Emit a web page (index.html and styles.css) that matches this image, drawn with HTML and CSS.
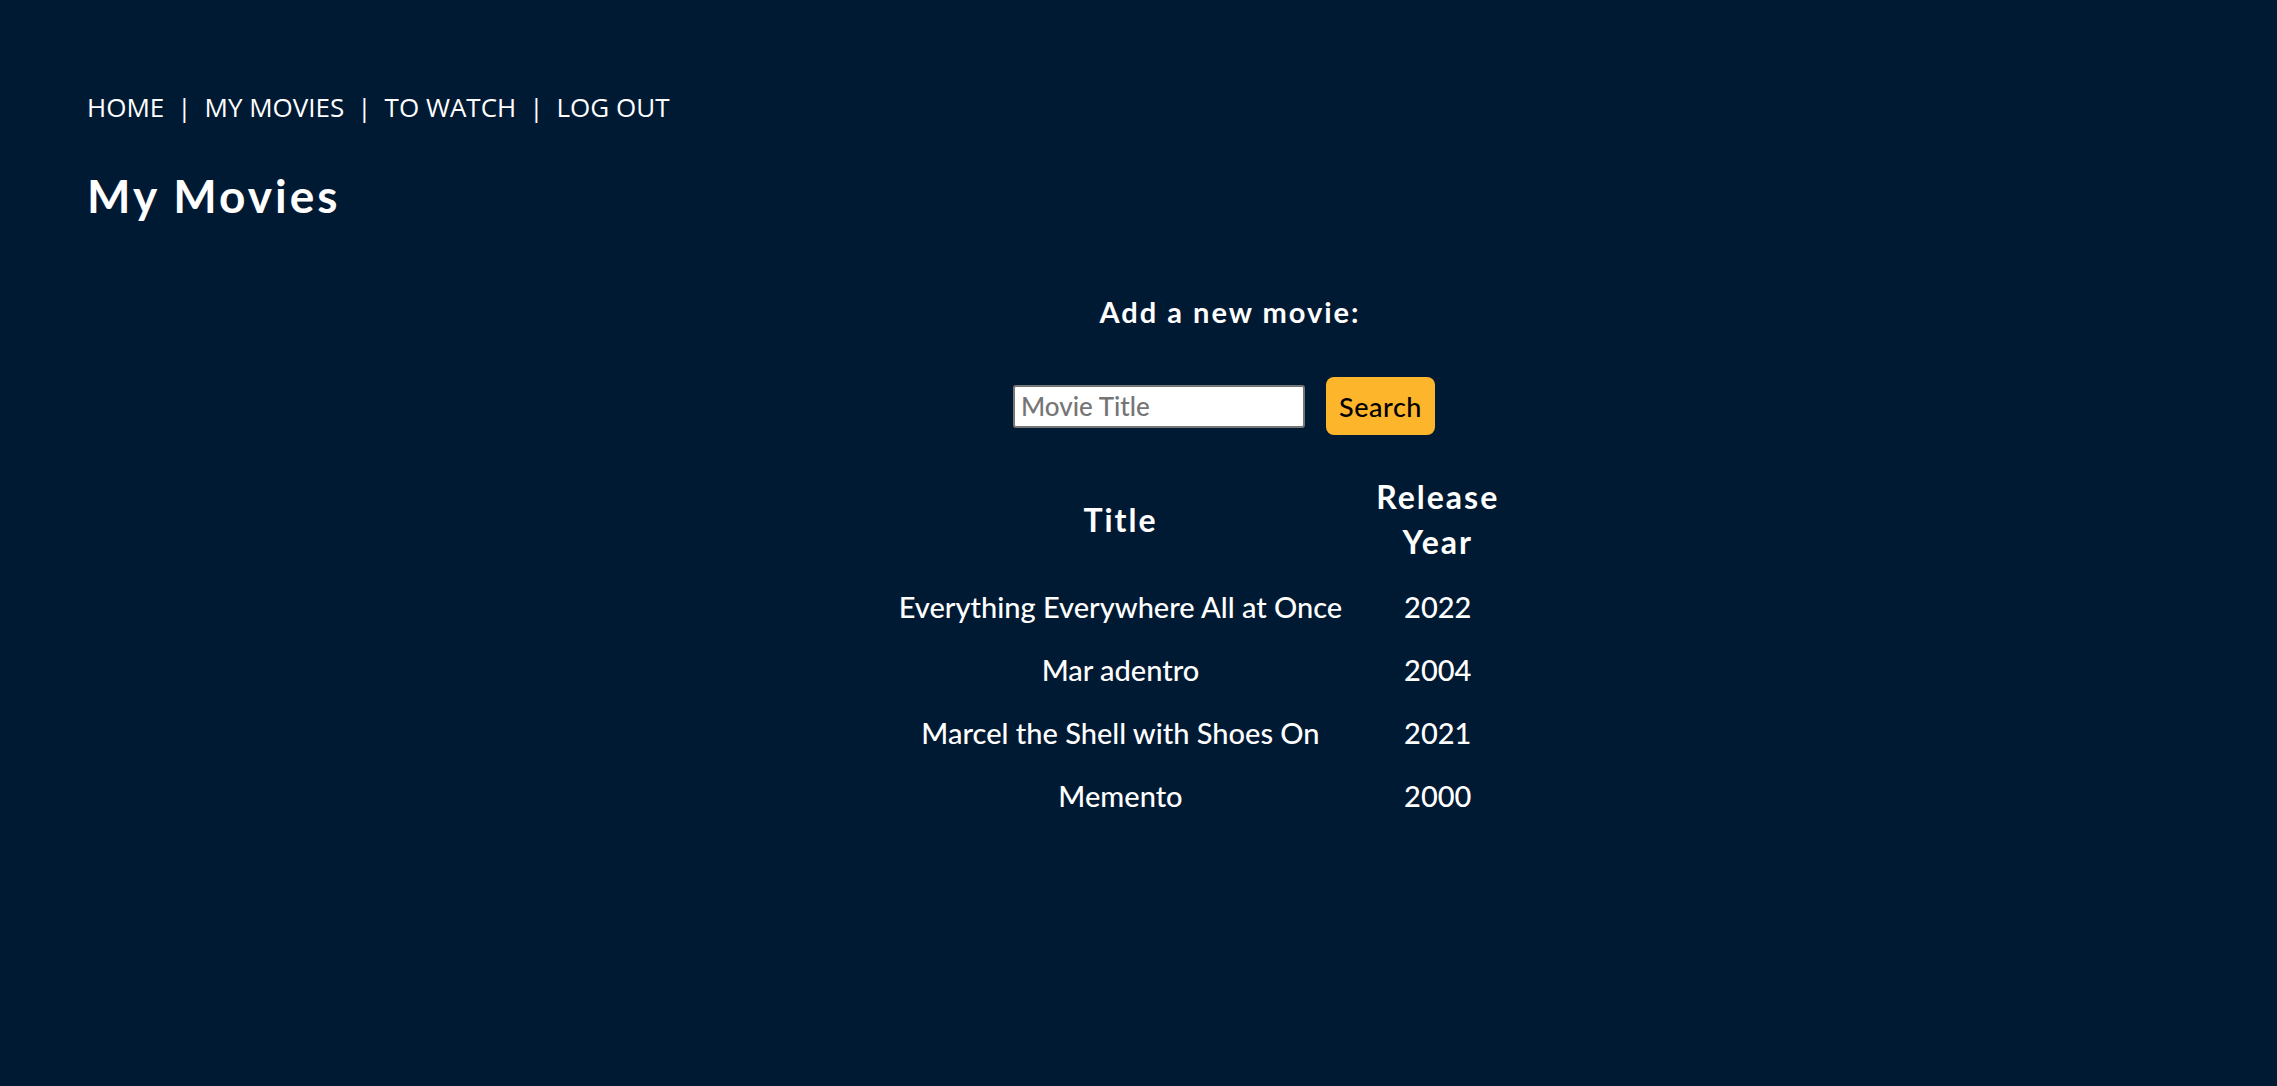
FILE: index.html
```html
<!DOCTYPE html>
<html lang="en">
<head>
<meta charset="utf-8">
<title>My Movies</title>
<link rel="stylesheet" href="styles.css">
</head>
<body>
<div class="page">
  <nav class="nav">
    <a href="#">HOME</a><span class="sep">|</span><a href="#">MY MOVIES</a><span class="sep">|</span><a href="#">TO WATCH</a><span class="sep">|</span><a href="#">LOG OUT</a>
  </nav>
  <h1 class="page-title">My Movies</h1>
  <main class="main">
    <h2 class="add-label">Add a new movie:</h2>
    <form class="search-form">
      <input class="search-input" type="text" placeholder="Movie Title">
      <button class="search-btn" type="button">Search</button>
    </form>
    <table class="movies">
      <thead>
        <tr><th class="col-title">Title</th><th class="col-year">Release Year</th></tr>
      </thead>
      <tbody>
        <tr><td>Everything Everywhere All at Once</td><td>2022</td></tr>
        <tr><td>Mar adentro</td><td>2004</td></tr>
        <tr><td>Marcel the Shell with Shoes On</td><td>2021</td></tr>
        <tr><td>Memento</td><td>2000</td></tr>
      </tbody>
    </table>
  </main>
</div>
</body>
</html>
```

FILE: styles.css
```css
html, body {
  margin: 0;
  padding: 0;
}
body {
  background: #011a33;
  color: #ffffff;
  font-family: "Lato", "Noto Sans", sans-serif;
  min-height: 1086px;
}
.page {
  padding: 90px 0 0 87px;
}
.nav {
  font-family: "Open Sans", "Noto Sans", sans-serif;
  font-size: 26px;
  line-height: 1.362;
  white-space: nowrap;
}
.nav a {
  color: #ffffff;
  text-decoration: none;
}
.nav .sep {
  margin: 0 13px;
}
.page-title {
  margin: 43px 0 0;
  font-size: 46px;
  font-weight: 700;
  letter-spacing: 3px;
  line-height: 1.2;
}
.main {
  display: flex;
  flex-direction: column;
  align-items: center;
  padding-left: 84px;
}
.add-label {
  margin: 71px 0 0;
  padding-left: 12px;
  font-size: 29px;
  font-weight: 700;
  letter-spacing: 2px;
  line-height: 1.2;
}
.search-form {
  display: flex;
  align-items: center;
  gap: 21px;
  margin-top: 48px;
}
.search-input {
  box-sizing: border-box;
  width: 292px;
  height: 43px;
  border: 2px solid #767676;
  border-radius: 3px;
  padding: 0 6px;
  font-family: "Lato", "Noto Sans", sans-serif;
  font-size: 26px;
  font-weight: 500;
  color: #000;
  background: #fff;
}
.search-input::placeholder {
  color: #757575;
}
.search-btn {
  box-sizing: border-box;
  width: 109px;
  height: 58px;
  border: none;
  border-radius: 8px;
  background: #fdb52b;
  color: #000;
  font-family: "Lato", "Noto Sans", sans-serif;
  font-size: 27px;
  font-weight: 500;
  letter-spacing: 0.5px;
  padding: 0;
}
.movies {
  margin-top: 28px;
  margin-right: 50px;
  border-spacing: 2px;
  text-align: center;
}
.movies th {
  font-size: 32px;
  font-weight: 700;
  letter-spacing: 2px;
  line-height: 44.5px;
  padding: 10px 16px;
  vertical-align: middle;
}
.movies th.col-title {
  width: 441px;
}
.movies th.col-year {
  width: 122px;
}
.movies td {
  font-size: 29px;
  font-weight: 500;
  line-height: 41px;
  padding: 10px 16px;
  white-space: nowrap;
}
```
